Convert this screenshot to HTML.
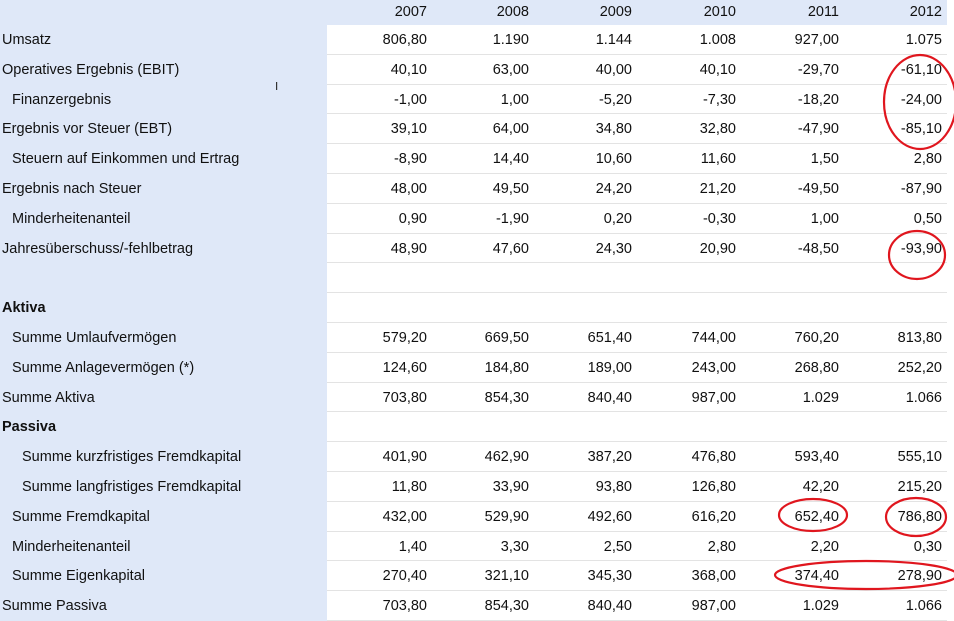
<!DOCTYPE html><html><head><style>
body{margin:0;width:954px;height:621px;overflow:hidden;background:#fff;font-family:"Liberation Sans",Arial,sans-serif;font-size:14.5px;color:#111;position:relative}
.hdr{position:absolute;left:0;top:0;width:947px;height:25px;background:#dfe8f8}
.lc{position:absolute;left:0;top:0;width:327px;height:621px;background:#dfe8f8}
.r{position:absolute;left:0;width:947px;height:30px}
.r .l{position:absolute;left:2px;top:7px;white-space:nowrap}
.r .v{position:absolute;top:7px;width:100px;text-align:right}
.line{position:absolute;left:327px;width:620px;height:1px;background:#e3e3e3}
svg{position:absolute;left:0;top:0}
</style></head><body>
<div class="lc"></div><div class="hdr"></div>
<div id="t"></div>
<svg width="954" height="621"><g fill="none" stroke="#e0161e" stroke-width="2.2">
<ellipse cx="920" cy="102" rx="36" ry="47"/>
<ellipse cx="917" cy="255" rx="28" ry="24"/>
<ellipse cx="813" cy="515" rx="34" ry="16"/>
<ellipse cx="916" cy="517" rx="30" ry="19"/>
<ellipse cx="866" cy="575" rx="91" ry="14"/>
</g>
<rect x="276" y="82" width="1.2" height="8" fill="#333"/></svg>
<script>
const R=[["",["2007","2008","2009","2010","2011","2012"],0],
["Umsatz",["806,80","1.190","1.144","1.008","927,00","1.075"],0],
["Operatives Ergebnis (EBIT)",["40,10","63,00","40,00","40,10","-29,70","-61,10"],0],
["Finanzergebnis",["-1,00","1,00","-5,20","-7,30","-18,20","-24,00"],1],
["Ergebnis vor Steuer (EBT)",["39,10","64,00","34,80","32,80","-47,90","-85,10"],0],
["Steuern auf Einkommen und Ertrag",["-8,90","14,40","10,60","11,60","1,50","2,80"],1],
["Ergebnis nach Steuer",["48,00","49,50","24,20","21,20","-49,50","-87,90"],0],
["Minderheitenanteil",["0,90","-1,90","0,20","-0,30","1,00","0,50"],1],
["Jahresüberschuss/-fehlbetrag",["48,90","47,60","24,30","20,90","-48,50","-93,90"],0],
["",[],0],
["<b>Aktiva</b>",[],0],
["Summe Umlaufvermögen",["579,20","669,50","651,40","744,00","760,20","813,80"],1],
["Summe Anlagevermögen (*)",["124,60","184,80","189,00","243,00","268,80","252,20"],1],
["Summe Aktiva",["703,80","854,30","840,40","987,00","1.029","1.066"],0],
["<b>Passiva</b>",[],0],
["Summe kurzfristiges Fremdkapital",["401,90","462,90","387,20","476,80","593,40","555,10"],2],
["Summe langfristiges Fremdkapital",["11,80","33,90","93,80","126,80","42,20","215,20"],2],
["Summe Fremdkapital",["432,00","529,90","492,60","616,20","652,40","786,80"],1],
["Minderheitenanteil",["1,40","3,30","2,50","2,80","2,20","0,30"],1],
["Summe Eigenkapital",["270,40","321,10","345,30","368,00","374,40","278,90"],1],
["Summe Passiva",["703,80","854,30","840,40","987,00","1.029","1.066"],0]];
const X=[427,529,632,736,839,942];let h="";
R.forEach((r,i)=>{let top=i==0?-3:25+(i-1)*29.8;
h+=`<div class="r" style="top:${top}px"><span class="l" style="left:${2+r[2]*10}px">${r[0]}</span>`;
r[1].forEach((v,j)=>h+=`<span class="v" style="left:${X[j]-100}px">${v}</span>`);h+="</div>";
if(i>0)h+=`<div class="line" style="top:${Math.round(25+i*29.8)-1}px"></div>`;});
document.getElementById("t").innerHTML=h;
</script></body></html>
